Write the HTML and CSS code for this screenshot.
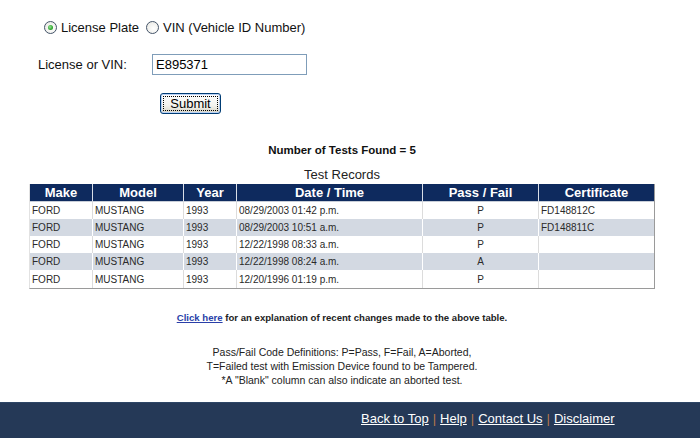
FILE: index.html
```html
<!DOCTYPE html>
<html>
<head>
<meta charset="utf-8">
<title>Test Records</title>
<link rel="stylesheet" href="styles.css">
</head>
<body>
<div class="page">
  <form class="search">
    <div class="choice">
      <label class="opt"><span class="radio checked"></span>License Plate</label>
      <label class="opt"><span class="radio"></span>VIN (Vehicle ID Number)</label>
    </div>
    <div class="field">
      <span class="field-label">License or VIN:</span>
      <span class="input">E895371</span>
    </div>
    <div class="actions">
      <span class="button"><span class="button-inner">Submit</span></span>
    </div>
  </form>

  <p class="count">Number of Tests Found = 5</p>

  <table class="records">
    <caption>Test Records</caption>
    <colgroup>
      <col class="c-make"><col class="c-model"><col class="c-year"><col class="c-date"><col class="c-pf"><col class="c-cert">
    </colgroup>
    <thead>
      <tr><th>Make</th><th>Model</th><th>Year</th><th>Date / Time</th><th>Pass / Fail</th><th>Certificate</th></tr>
    </thead>
    <tbody>
      <tr><td>FORD</td><td>MUSTANG</td><td>1993</td><td>08/29/2003 01:42 p.m.</td><td class="pf">P</td><td>FD148812C</td></tr>
      <tr class="alt"><td>FORD</td><td>MUSTANG</td><td>1993</td><td>08/29/2003 10:51 a.m.</td><td class="pf">P</td><td>FD148811C</td></tr>
      <tr><td>FORD</td><td>MUSTANG</td><td>1993</td><td>12/22/1998 08:33 a.m.</td><td class="pf">P</td><td></td></tr>
      <tr class="alt"><td>FORD</td><td>MUSTANG</td><td>1993</td><td>12/22/1998 08:24 a.m.</td><td class="pf">A</td><td></td></tr>
      <tr><td>FORD</td><td>MUSTANG</td><td>1993</td><td>12/20/1996 01:19 p.m.</td><td class="pf">P</td><td></td></tr>
    </tbody>
  </table>

  <p class="note"><a href="#" class="note-link">Click here</a> for an explanation of recent changes made to the above table.</p>

  <p class="defs">Pass/Fail Code Definitions: P=Pass, F=Fail, A=Aborted,<br>T=Failed test with Emission Device found to be Tampered.<br>*A "Blank" column can also indicate an aborted test.</p>
</div>

<footer class="footer">
  <a href="#">Back to Top</a><span class="sep">|</span><a href="#">Help</a><span class="sep">|</span><a href="#">Contact Us</a><span class="sep">|</span><a href="#">Disclaimer</a>
</footer>
</body>
</html>
```

FILE: styles.css
```css
html, body {
  margin: 0;
  padding: 0;
  background: #ffffff;
}

body {
  font-family: "Liberation Sans", Arial, sans-serif;
  color: #000;
  width: 700px;
  height: 438px;
  overflow: hidden;
}

.page {
  width: 684px;
}

.search {
  margin: 0;
}

.choice {
  display: flex;
  align-items: center;
  height: 17px;
  margin-top: 19px;
  padding-left: 44px;
  font-size: 13px;
  color: #111;
}

.opt {
  display: inline-flex;
  align-items: center;
  margin-right: 7px;
}

.radio {
  box-sizing: border-box;
  width: 13px;
  height: 13px;
  border-radius: 50%;
  border: 1px solid #445469;
  background: radial-gradient(circle at 60% 60%, #ffffff 0%, #e6e6e0 100%);
  margin-right: 4px;
  display: inline-flex;
  align-items: center;
  justify-content: center;
}

.radio.checked::after {
  content: "";
  width: 5px;
  height: 5px;
  border-radius: 50%;
  background: radial-gradient(circle at 40% 40%, #9be29b 0%, #2fa82f 60%, #1f8a1f 100%);
}

.field {
  display: flex;
  align-items: center;
  height: 21px;
  margin-top: 18px;
  padding-left: 38px;
  font-size: 13px;
  color: #111;
}

.field-label {
  width: 114px;
}

.input {
  box-sizing: border-box;
  width: 155px;
  height: 21px;
  border: 1px solid #7f9db9;
  padding: 0 3px;
  line-height: 19px;
  font-size: 13px;
  color: #000;
}

.actions {
  margin-top: 18px;
  padding-left: 160px;
  height: 21px;
}

.button {
  box-sizing: border-box;
  display: inline-flex;
  width: 61px;
  height: 21px;
  border: 1px solid #003c74;
  border-radius: 3px;
  background: linear-gradient(#ffffff 0%, #f3f3ee 60%, #d8d4c4 100%);
  padding: 2px;
  box-shadow: inset 0 0 0 1px #b9d1f5;
}

.button-inner {
  flex: 1;
  display: flex;
  align-items: center;
  justify-content: center;
  border: 1px dotted #000;
  font-size: 13px;
  color: #000;
  line-height: 13px;
}

.count {
  margin: 29px 0 0;
  text-align: center;
  font-size: 11.5px;
  font-weight: bold;
  line-height: 14px;
  color: #111;
}

.records {
  margin: 10px auto 0;
  width: 625px;
  table-layout: fixed;
  border-collapse: separate;
  border-spacing: 0;
  border-right: 1px solid #9a9a9a;
  border-bottom: 1px solid #9a9a9a;
  border-left: 1px solid #e2e2e2;
}

.records caption {
  font-size: 13px;
  line-height: 16px;
  color: #222;
  padding-bottom: 1px;
}

.c-make { width: 63px; }
.c-model { width: 91px; }
.c-year { width: 53px; }
.c-date { width: 186px; }
.c-pf { width: 116px; }
.c-cert { width: 115px; }

.records th {
  background: #0e2a5e;
  color: #ffffff;
  font-size: 13px;
  font-weight: bold;
  height: 17px;
  padding: 0;
  line-height: 17px;
  border-right: 1px solid #d8dde6;
  border-bottom: 1px solid #c8ced8;
  text-align: center;
}

.records th:last-child,
.records td:last-child {
  border-right: none;
}

.records td {
  font-size: 10px;
  color: #2a2a2a;
  height: 17px;
  padding: 0 0 0 2px;
  line-height: 17px;
  border-right: 1px solid #dcdcdc;
  white-space: nowrap;
  overflow: hidden;
}

.records tbody tr:last-child td {
  height: 18px;
}

.records tr.alt td {
  background: #d3d9e2;
  border-right-color: #ffffff;
}

.records td.pf {
  text-align: center;
  padding: 0;
}

.note {
  margin: 23px 0 0;
  text-align: center;
  font-size: 9.6px;
  font-weight: bold;
  line-height: 12px;
  color: #222;
}

.note-link {
  color: #2a3fa8;
  text-decoration: underline;
}

.defs {
  margin: 21px 0 0;
  text-align: center;
  font-size: 10.5px;
  line-height: 14px;
  color: #222;
}

.footer {
  margin-top: 15px;
  height: 36px;
  box-sizing: border-box;
  background: #253957;
  border-top: 1px solid #2e4666;
  padding: 8px 0 0 361px;
  font-size: 13px;
  line-height: 16px;
}

.footer a {
  color: #ffffff;
  text-decoration: underline;
}

.sep {
  color: #b7784a;
  margin: 0 4px;
}
```
